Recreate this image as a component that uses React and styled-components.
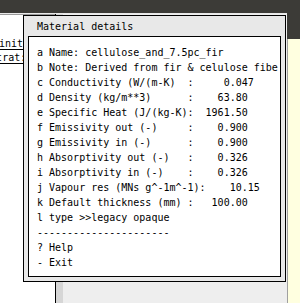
import React from "react";
import styled, { createGlobalStyle } from "styled-components";

const GlobalStyle = createGlobalStyle`
  html, body {
    margin: 0;
    padding: 0;
    background: #eeeeee;
  }
`;

const materialLines = [
  "a Name: cellulose_and_7.5pc_fir",
  "b Note: Derived from fir & celulose fibe",
  "c Conductivity (W/(m-K)  :     0.047",
  "d Density (kg/m**3)      :    63.80",
  "e Specific Heat (J/(kg-K):  1961.50",
  "f Emissivity out (-)     :    0.900",
  "g Emissivity in (-)      :    0.900",
  "h Absorptivity out (-)   :    0.326",
  "i Absorptivity in (-)    :    0.326",
  "j Vapour res (MNs g^-1m^-1):    10.15",
  "k Default thickness (mm) :   100.00",
  "l type >>legacy opaque",
  "----------------------",
  "? Help",
  "- Exit",
];

const links = [
  { text: "Definitions", shift: -19 },
  { text: "Demonstrat:", shift: -40 },
];

function App() {
  return (
    <Page>
      <GlobalStyle />
      <TopBar />
      <Body>
        <Workspace>
          <LeftDoc>
            {links.map((l) => (
              <LinkRow key={l.text}>
                <LinkText shift={l.shift}>{l.text}</LinkText>
              </LinkRow>
            ))}
          </LeftDoc>
          <Scrollbar />
          <Canvas />
        </Workspace>
        <SidePanel>
          <SideHeader />
          <SideBody />
        </SidePanel>
      </Body>

      <Dialog>
        <DialogTitle>Material details</DialogTitle>
        <MenuBox>
          {materialLines.map((line, i) => (
            <MenuLine key={i}>{line}</MenuLine>
          ))}
        </MenuBox>
      </Dialog>
    </Page>
  );
}

const Page = styled.div`
  position: relative;
  width: 300px;
  height: 303px;
  overflow: hidden;
  display: flex;
  flex-direction: column;
  background: #eeeeee;
  font-family: "DejaVu Sans Mono", "Liberation Mono", monospace;
  font-size: 10px;
  color: #000;
`;

const TopBar = styled.div`
  height: 13px;
  flex-shrink: 0;
  background: #3c3b37;
`;

const Body = styled.div`
  flex: 1;
  display: flex;
  flex-direction: row;
`;

const Workspace = styled.div`
  width: 287px;
  display: flex;
  flex-direction: row;
  background: #e8e8e8;
  padding-top: 1px;
`;

const LeftDoc = styled.div`
  width: 55px;
  background: #ffffff;
  border-top: 1px solid #9a9a9a;
  padding-top: 22px;
  display: flex;
  flex-direction: column;
`;

const LinkRow = styled.div`
  height: 14px;
  line-height: 14px;
  overflow: hidden;
  white-space: pre;
`;

const LinkText = styled.span`
  display: inline-block;
  margin-left: ${(p) => p.shift}px;
  text-decoration: underline;
  text-underline-offset: 2px;
`;

const Scrollbar = styled.div`
  width: 7px;
  background: #d6d6d6;
  border-left: 1px solid #000;
`;

const Canvas = styled.div`
  flex: 1;
  background: #eeeeee;
`;

const SidePanel = styled.div`
  flex: 1;
  display: flex;
  flex-direction: column;
`;

const SideHeader = styled.div`
  height: 26px;
  background: #3c3b37;
`;

const SideBody = styled.div`
  flex: 1;
  background: #ffffe0;
  border-left: 1px solid #a0a0a0;
`;

const Dialog = styled.div`
  position: absolute;
  left: 23px;
  top: 15px;
  width: 263px;
  height: 267px;
  box-sizing: border-box;
  border: 1px solid #000;
  background: #e8e8e8;
  padding: 0 4px 4px 4px;
  display: flex;
  flex-direction: column;
`;

const DialogTitle = styled.div`
  height: 20px;
  box-sizing: border-box;
  padding: 3px 0 2px 9px;
  line-height: 15px;
  white-space: pre;
`;

const MenuBox = styled.div`
  flex: 1;
  background: #ffffff;
  border: 1px solid #000;
  padding: 8px 0 0 8px;
  overflow: hidden;
`;

const MenuLine = styled.div`
  height: 15px;
  line-height: 15px;
  white-space: pre;
  overflow: hidden;
`;

export default App;
